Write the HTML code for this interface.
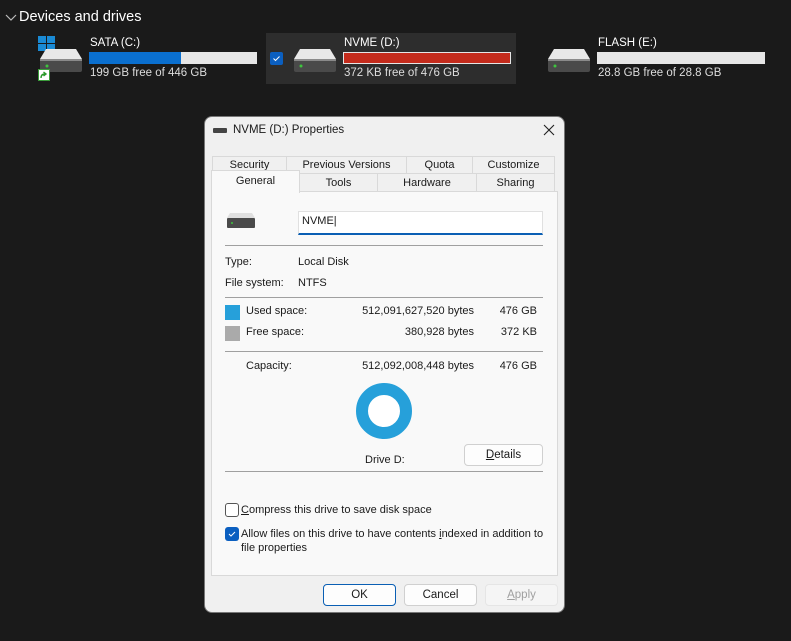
<!DOCTYPE html>
<html><head><meta charset="utf-8"><style>
*{margin:0;padding:0;box-sizing:border-box}
body{width:791px;height:641px;background:#1a1a1a;font-family:"Liberation Sans",sans-serif;position:relative;overflow:hidden;color:#fff}
.a{position:absolute;white-space:nowrap}
.d{font-size:11px;color:#1a1a1a}
.bar{position:absolute;height:12px;background:#e6e6e6}
.tab{position:absolute;border:1px solid #d9d9d9;background:#f0f0f0;font-size:11px;color:#1a1a1a;text-align:center;line-height:16px}
.ln{position:absolute;left:225px;width:318px;height:1px;background:#a0a0a0}
.btn{position:absolute;height:22px;border:1px solid #d0d0d0;border-radius:4px;background:#fdfdfd;font-size:11.5px;color:#1a1a1a;text-align:center;line-height:20px}
</style></head><body>
<svg class="a" style="left:5px;top:12px" width="12" height="10"><path d="M1 3 L6 8 L11 3" fill="none" stroke="#bbb" stroke-width="1.2"/></svg>
<div class="a" style="left:19px;top:9px;font-size:14.5px;color:#fff">Devices and drives</div>

<svg width="0" height="0" style="position:absolute"><defs><g id="drv"><path d="M6 0 H36 L42 10 H0 Z" fill="#e8e8e8"/><rect x="0" y="10" width="42" height="13" rx="2" fill="#4a4a4a"/><rect x="0" y="10" width="42" height="2" fill="#8a8a8a"/><circle cx="7" cy="17" r="1.5" fill="#3ec43e"/></g></defs></svg>

<svg class="a" style="left:38px;top:36px" width="18" height="16"><rect x="0" y="0" width="8" height="7" fill="#1a8ad4"/><rect x="9" y="0" width="8" height="7" fill="#1a8ad4"/><rect x="0" y="8" width="8" height="7" fill="#1a8ad4"/><rect x="9" y="8" width="8" height="7" fill="#1a8ad4"/></svg>
<svg class="a" style="left:40px;top:49px" width="42" height="23"><use href="#drv"/></svg>
<div class="a" style="left:38px;top:69px;width:12px;height:12px;background:#fff;border:1px solid #3a9b3a"></div>
<svg class="a" style="left:39px;top:70px" width="10" height="10"><path d="M2 8 Q2 4 6 4 M4.5 2 L7 4 L4.5 6" fill="none" stroke="#2a9a2a" stroke-width="1.4"/></svg>
<div class="a" style="left:90px;top:37px;font-size:11.5px;color:#fff">SATA (C:)</div>
<div class="bar" style="left:89px;top:52px;width:168px"><div style="width:92px;height:12px;background:#0a6fcf"></div></div>
<div class="a" style="left:90px;top:67px;font-size:11.5px;color:#ddd">199 GB free of 446 GB</div>

<div class="a" style="left:266px;top:33px;width:250px;height:51px;background:#2d2d2d"></div>
<div class="a" style="left:270px;top:52px;width:13px;height:13px;background:#0b5fc0;border-radius:2px"></div>
<svg class="a" style="left:270px;top:52px" width="13" height="13"><path d="M3.5 6.5 L5.5 8.5 L9.5 4.5" fill="none" stroke="#fff" stroke-width="1"/></svg>
<svg class="a" style="left:294px;top:49px" width="42" height="23"><use href="#drv"/></svg>
<div class="a" style="left:344px;top:37px;font-size:11.5px;color:#fff">NVME (D:)</div>
<div class="bar" style="left:343px;top:52px;width:168px;background:#e6e6e6"><div style="margin:1px;width:166px;height:10px;background:#c42b1c"></div></div>
<div class="a" style="left:344px;top:67px;font-size:11.5px;color:#ddd">372 KB free of 476 GB</div>

<svg class="a" style="left:548px;top:49px" width="42" height="23"><use href="#drv"/></svg>
<div class="a" style="left:598px;top:37px;font-size:11.5px;color:#fff">FLASH (E:)</div>
<div class="bar" style="left:597px;top:52px;width:168px"></div>
<div class="a" style="left:598px;top:67px;font-size:11.5px;color:#ddd">28.8 GB free of 28.8 GB</div>

<div class="a" style="left:204px;top:116px;width:361px;height:497px;background:#f0f0f0;border:1px solid #777;border-radius:8px"></div>
<div class="a" style="left:213px;top:128px;width:14px;height:5px;background:#444;border-radius:1px"></div>
<div class="a d" style="left:233px;top:124px;font-size:11.5px">NVME (D:) Properties</div>
<svg class="a" style="left:543px;top:124px" width="12" height="12"><path d="M1 1 L11 11 M11 1 L1 11" stroke="#222" stroke-width="1.1"/></svg>

<div class="tab" style="left:212px;top:156px;width:75px;height:18px">Security</div>
<div class="tab" style="left:286px;top:156px;width:121px;height:18px">Previous Versions</div>
<div class="tab" style="left:406px;top:156px;width:67px;height:18px">Quota</div>
<div class="tab" style="left:472px;top:156px;width:83px;height:18px">Customize</div>
<div class="tab" style="left:299px;top:173px;width:79px;height:19px;line-height:18px">Tools</div>
<div class="tab" style="left:377px;top:173px;width:100px;height:19px;line-height:18px">Hardware</div>
<div class="tab" style="left:476px;top:173px;width:79px;height:19px;line-height:18px">Sharing</div>
<div class="a" style="left:211px;top:191px;width:347px;height:385px;background:#f9f9f9;border:1px solid #d9d9d9"></div>
<div class="tab" style="left:211px;top:170px;width:89px;height:23px;background:#f9f9f9;border-bottom:none;line-height:20px">General</div>

<svg class="a" style="left:227px;top:213px" width="28" height="16"><path d="M3 0 H25 L28 5 H0 Z" fill="#e0e0e0"/><rect x="0" y="5" width="28" height="10" rx="1" fill="#4a4a4a"/><circle cx="5" cy="10" r="1" fill="#3ec43e"/></svg>
<div class="a" style="left:298px;top:211px;width:245px;height:24px;background:#fff;border:1px solid #e0e0e0;border-bottom:2px solid #0a5fb4"></div>
<div class="a d" style="left:302px;top:215px">NVME|</div>
<div class="ln" style="top:245px"></div>
<div class="a d" style="left:225px;top:256px">Type:</div><div class="a d" style="left:298px;top:256px">Local Disk</div>
<div class="a d" style="left:225px;top:277px">File system:</div><div class="a d" style="left:298px;top:277px">NTFS</div>
<div class="ln" style="top:297px"></div>
<div class="a" style="left:225px;top:305px;width:15px;height:15px;background:#26a0da"></div>
<div class="a d" style="left:246px;top:305px">Used space:</div>
<div class="a d" style="left:474px;top:305px;transform:translateX(-100%)">512,091,627,520 bytes</div>
<div class="a d" style="left:537px;top:305px;transform:translateX(-100%)">476 GB</div>
<div class="a" style="left:225px;top:326px;width:15px;height:15px;background:#aaa"></div>
<div class="a d" style="left:246px;top:326px">Free space:</div>
<div class="a d" style="left:474px;top:326px;transform:translateX(-100%)">380,928 bytes</div>
<div class="a d" style="left:537px;top:326px;transform:translateX(-100%)">372 KB</div>
<div class="ln" style="top:351px"></div>
<div class="a d" style="left:246px;top:360px">Capacity:</div>
<div class="a d" style="left:474px;top:360px;transform:translateX(-100%)">512,092,008,448 bytes</div>
<div class="a d" style="left:537px;top:360px;transform:translateX(-100%)">476 GB</div>
<svg class="a" style="left:355px;top:382px" width="58" height="58"><circle cx="29" cy="29" r="22" fill="#fff" stroke="#26a0da" stroke-width="12"/></svg>
<div class="a d" style="left:365px;top:454px">Drive D:</div>
<div class="btn" style="left:464px;top:444px;width:79px"><u>D</u>etails</div>
<div class="ln" style="top:471px"></div>

<div class="a" style="left:225px;top:503px;width:14px;height:14px;border:1px solid #555;border-radius:3px;background:#fff"></div>
<div class="a d" style="left:241px;top:504px"><u>C</u>ompress this drive to save disk space</div>
<div class="a" style="left:225px;top:527px;width:14px;height:14px;background:#0b5fc0;border-radius:3px"></div>
<svg class="a" style="left:225px;top:527px" width="14" height="14"><path d="M4 7 L6 9 L10 5" fill="none" stroke="#fff" stroke-width="1"/></svg>
<div class="a d" style="left:241px;top:527px;line-height:14px">Allow files on this drive to have contents <u>i</u>ndexed in addition to<br>file properties</div>

<div class="btn" style="left:323px;top:584px;width:73px;border:1px solid #0a5fb4">OK</div>
<div class="btn" style="left:404px;top:584px;width:73px">Cancel</div>
<div class="btn" style="left:485px;top:584px;width:73px;background:#f5f5f5;border-color:#e5e5e5;color:#a0a0a0"><u>A</u>pply</div>
</body></html>
